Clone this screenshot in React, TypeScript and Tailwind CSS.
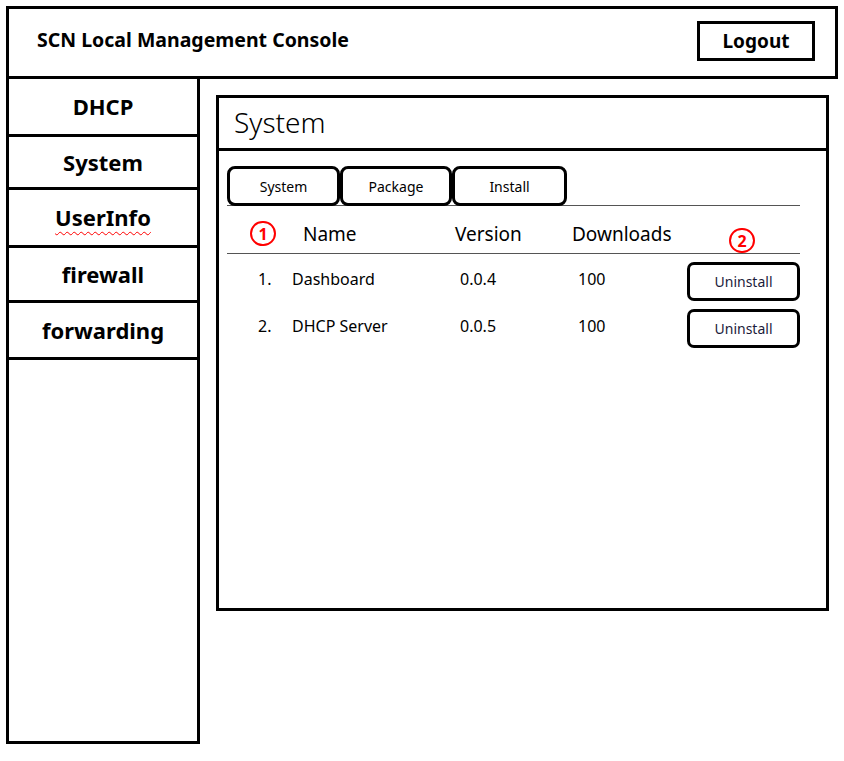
import React from 'react'

const font = { fontFamily: '"Noto Sans", "Open Sans", sans-serif' }

const menu = [
  { label: 'DHCP', h: 'h-[58px]' },
  { label: 'System', h: 'h-[53px]' },
  { label: 'UserInfo', h: 'h-[58px]', wavy: true },
  { label: 'firewall', h: 'h-[55px]' },
  { label: 'forwarding', h: 'h-[57px]' },
]

const packages = [
  { no: '1.', name: 'Dashboard', version: '0.0.4', downloads: '100' },
  { no: '2.', name: 'DHCP Server', version: '0.0.5', downloads: '100' },
]

function Marker({ n }: { n: string }) {
  return (
    <span className="flex h-[25px] w-[26px] items-center justify-center rounded-full border-[2.5px] border-[#ff0000] text-[16px] font-bold leading-none text-[#ff0000]">
      {n}
    </span>
  )
}

export default function App() {
  return (
    <div className="h-[761px] w-[844px] bg-white pl-[6px] pt-[6px] text-black" style={font}>
      {/* Header */}
      <header className="flex h-[73px] w-[832px] items-center justify-between border-[3px] border-black pl-[28px] pr-[20px]">
        <h1 className="mt-[-5px] text-[19.5px] font-bold">SCN Local Management Console</h1>
        <button className="mt-[-3px] h-[40px] w-[118px] border-[3px] border-black text-[19px] font-bold">
          Logout
        </button>
      </header>

      <div className="flex">
        {/* Sidebar */}
        <nav className="flex h-[665px] w-[194px] flex-col border-x-[3px] border-b-[3px] border-black">
          {menu.map((m) => (
            <div
              key={m.label}
              className={`flex ${m.h} items-center justify-center border-b-[3px] border-black text-[22px] font-bold`}
            >
              <span
                className={
                  m.wavy
                    ? 'underline decoration-[#ff0000] decoration-wavy decoration-1 underline-offset-[5px]'
                    : ''
                }
              >
                {m.label}
              </span>
            </div>
          ))}
        </nav>

        {/* Main panel */}
        <main className="ml-[16px] mt-[16px] h-[516px] w-[613px] border-[3px] border-black">
          <div className="flex h-[53px] items-center border-b-[3px] border-black pb-[3px] pl-[15px]">
            <h2 className="text-[28px] font-light">System</h2>
          </div>

          <div className="pl-[8px] pt-[15px]">
            <div className="flex">
              {['System', 'Package', 'Install'].map((t, i) => (
                <div
                  key={t}
                  className={`flex h-[40px] ${i === 2 ? 'w-[115px]' : i === 1 ? 'w-[112px]' : 'w-[113px]'} items-center justify-center rounded-[8px] border-[3px] border-black text-[14px]`}
                >
                  {t}
                </div>
              ))}
            </div>

            <div className="w-[573px]">
              <div className="mt-[-1px] h-px bg-[#555]" />

              {/* Column header */}
              <div className="relative flex h-[47px] items-center pl-[23px] text-[19px]">
                <div className="mt-[8px]">
                  <Marker n="1" />
                </div>
                <span className="ml-[27px] mt-[9px] w-[152px]">Name</span>
                <span className="mt-[9px] w-[117px]">Version</span>
                <span className="mt-[9px] w-[157px]">Downloads</span>
                <div className="mt-[22px]">
                  <Marker n="2" />
                </div>
              </div>
              <div className="h-px bg-[#555]" />

              {/* Rows */}
              <div className="flex flex-col gap-[8px] pt-[8px]">
                {packages.map((p) => (
                  <div key={p.no} className="flex h-[39px] items-center text-[16px]">
                    <span className="w-[65px] pb-[6px] pl-[31px]">{p.no}</span>
                    <span className="w-[168px] pb-[6px]">{p.name}</span>
                    <span className="w-[118px] pb-[6px]">{p.version}</span>
                    <span className="w-[109px] pb-[6px]">{p.downloads}</span>
                    <button className="h-[39px] w-[113px] rounded-[7px] border-[3px] border-black pb-[1px] text-[14px] text-[#1b1b3a]">
                      Uninstall
                    </button>
                  </div>
                ))}
              </div>
            </div>
          </div>
        </main>
      </div>
    </div>
  )
}
